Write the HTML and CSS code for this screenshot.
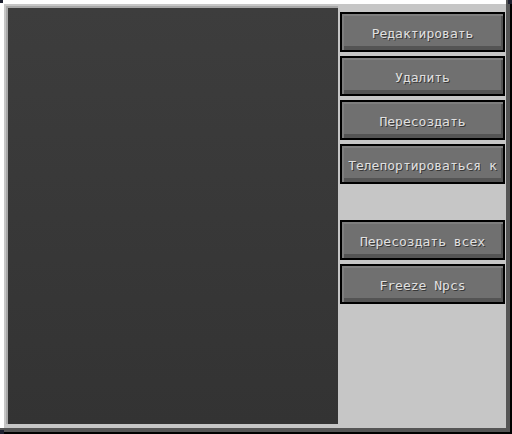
FILE: index.html
```html
<!DOCTYPE html>
<html lang="ru">
<head>
<meta charset="utf-8">
<link rel="stylesheet" href="styles.css">
</head>
<body>
<div class="frame">
  <span class="corner corner-tl"></span>
  <span class="corner corner-bl"></span>
  <span class="corner corner-tr"></span>
  <div class="list"></div>
  <div class="side">
    <div class="btn">Редактировать</div>
    <div class="btn">Удалить</div>
    <div class="btn">Пересоздать</div>
    <div class="btn">Телепортироваться к</div>
    <div class="btn btn-gap">Пересоздать всех</div>
    <div class="btn">Freeze Npcs</div>
  </div>
</div>
</body>
</html>
```
FILE: styles.css
```css
html, body {
  margin: 0;
  padding: 0;
  background: #1d2030;
}
.frame {
  position: relative;
  width: 512px;
  height: 434px;
  box-sizing: border-box;
  padding: 6px 0 0 6px;
  display: flex;
  align-items: flex-start;
  background: #c6c6c6;
  box-shadow:
    inset -2px -2px 0 #000,
    inset -6px -6px 0 #555555,
    inset 4px 4px 0 #ffffff;
}
.corner {
  position: absolute;
  background: #1d2030;
}
.corner-tl { left: 0; top: 0; width: 3px; height: 3px; }
.corner-bl { left: 0; bottom: 0; width: 4px; height: 4px; }
.corner-tr { right: 0; top: 0; width: 4px; height: 4px; }
.list {
  width: 332px;
  height: 418px;
  box-sizing: border-box;
  border-top: 2px solid #a8a8a8;
  border-left: 2px solid #a8a8a8;
  background: linear-gradient(#3d3d3d, #333333);
}
.side {
  margin: 6px 0 0 2px;
  width: 165px;
  display: flex;
  flex-direction: column;
  gap: 4px;
}
.btn {
  height: 40px;
  box-sizing: border-box;
  border: 2px solid #000;
  background: #707070;
  box-shadow:
    inset 2px 2px 0 #7e7e7e,
    inset -2px -4px 0 #545454;
  display: flex;
  align-items: center;
  justify-content: center;
  padding-top: 2px;
  font-family: "DejaVu Sans Mono", "Liberation Mono", monospace;
  font-size: 13px;
  color: #e0e0e0;
  text-shadow: 1px 1px 0 #383838;
  white-space: nowrap;
}
.btn-gap {
  margin-top: 32px;
}
```
